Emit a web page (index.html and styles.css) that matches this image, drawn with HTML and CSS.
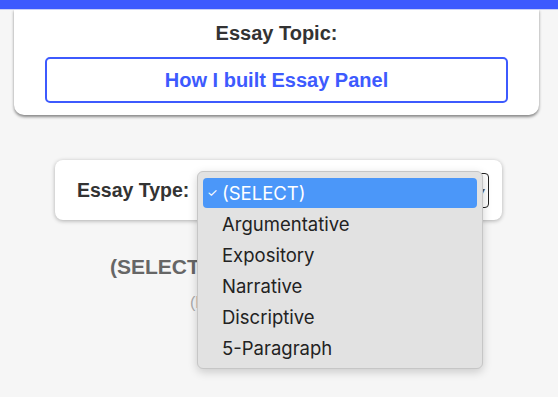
FILE: index.html
```html
<!DOCTYPE html>
<html lang="en">
<head>
    <meta charset="UTF-8">
    <meta name="viewport" content="width=device-width, initial-scale=1.0">
    <title>Essay Panel</title>
    <link rel="stylesheet" href="styles.css">
</head>
<body>
    <div class="top-bar"></div>
    <div class="page">
        <div class="topic-card">
            <h2>Essay Topic:</h2>
            <div class="topic-box">How I built Essay Panel</div>
        </div>

        <div class="type-card">
            <label class="type-label">Essay Type:</label>
            <div class="select-wrap">
                <div class="fake-select"><span class="arrow">&#9662;</span></div>
                <!-- открытый список вариантов -->
                <ul class="popup">
                    <li class="selected"><span class="check">&#10003;</span>(SELECT)</li>
                    <li><span class="check"></span>Argumentative</li>
                    <li><span class="check"></span>Expository</li>
                    <li><span class="check"></span>Narrative</li>
                    <li><span class="check"></span>Discriptive</li>
                    <li><span class="check"></span>5-Paragraph</li>
                </ul>
            </div>
        </div>

        <div class="result">
            <h3>(SELECT)</h3>
            <p>(F</p>
        </div>
    </div>
</body>
</html>
```

FILE: styles.css
```css
html, body {
    min-height: 100%;
    height: 100%;
}
body {
    margin: 0;
    background: #f6f6f6;
    font-family: "Liberation Sans", Arial, sans-serif;
    color: #333;
}
.top-bar {
    height: 9px;
    background: #3d5afe;
    box-shadow: 0 1px 0 #c8cff6;
    position: relative;
    z-index: 2;
}
.page {
    width: 553px;
    min-height: 388px;
}
.topic-card {
    margin: 0 14px;
    background: #fff;
    border-radius: 0 0 10px 10px;
    box-shadow: 0 2px 3px rgba(0, 0, 0, 0.45);
    padding: 13px 31px 12px;
    text-align: center;
}
.topic-card h2 {
    margin: 0 0 13px;
    font-size: 20px;
    line-height: 22px;
    color: #333;
}
.topic-box {
    height: 42px;
    border: 2px solid #3d5afe;
    border-radius: 5px;
    color: #3d5afe;
    font-weight: bold;
    font-size: 20px;
    line-height: 42px;
}
.type-card {
    margin: 45px 0 0 55px;
    width: 447px;
    height: 60px;
    background: #fff;
    border-radius: 8px;
    box-shadow: 0 1px 4px rgba(0, 0, 0, 0.3);
    display: flex;
    align-items: center;
    padding-left: 22px;
    box-sizing: border-box;
}
.type-label {
    font-weight: bold;
    font-size: 19.5px;
    color: #333;
    width: 123px;
}
.select-wrap {
    position: relative;
}
.fake-select {
    width: 287px;
    height: 33px;
    border: 1px solid #222;
    border-radius: 4px;
    background: #fff;
    display: flex;
    align-items: center;
    justify-content: flex-end;
}
.arrow {
    font-size: 10px;
    color: #555;
    margin-right: 3px;
}
.popup {
    position: absolute;
    z-index: 5;
    left: -3px;
    top: -2px;
    width: 286px;
    box-sizing: border-box;
    margin: 0;
    padding: 6px 5px 4px;
    list-style: none;
    background: #e2e2e2;
    border: 1px solid #c6c6c6;
    border-radius: 6px;
    box-shadow: 0 3px 10px rgba(0, 0, 0, 0.18);
    font-family: Inter, "Noto Sans", sans-serif;
    font-size: 18.5px;
    color: #222;
}
.popup li {
    height: 31px;
    line-height: 30px;
    padding-left: 4px;
    border-radius: 4px;
    display: flex;
}
.popup li.selected {
    height: 30px;
    margin-bottom: 1px;
    background: #4b97f9;
    color: #fff;
}
.check {
    width: 15px;
    font-size: 12px;
}
.result {
    padding-left: 110px;
    margin-top: 36px;
}
.result h3 {
    margin: 0;
    font-size: 21px;
    line-height: 22px;
    color: #666;
}
.result p {
    margin: 16px 0 0 80px;
    font-size: 16px;
    color: #aaa;
}
```
